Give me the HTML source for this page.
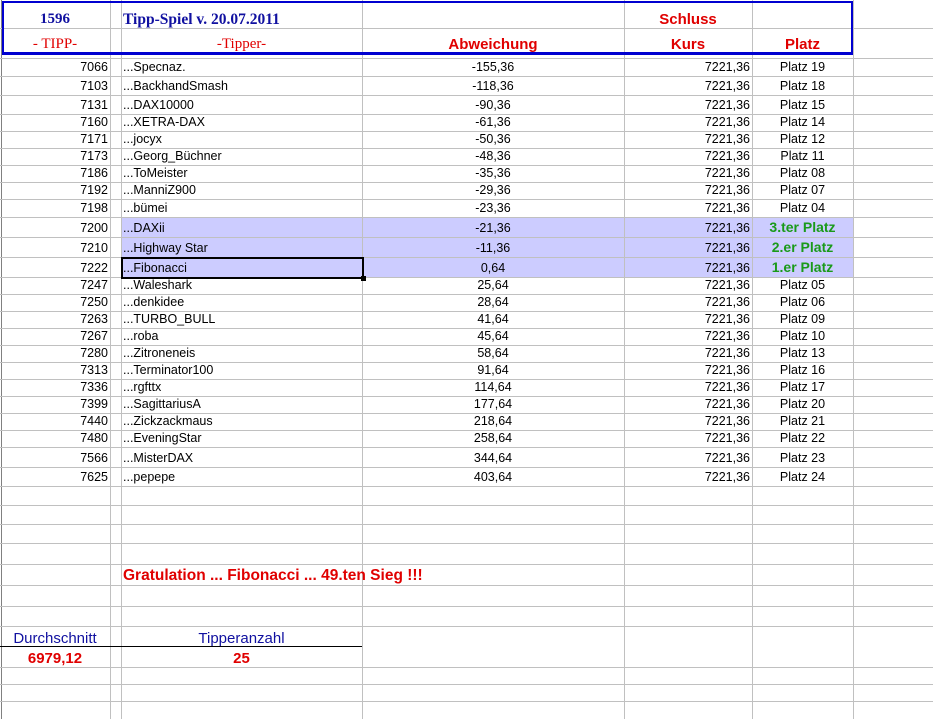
<!DOCTYPE html>
<html><head><meta charset="utf-8"><style>
body{margin:0;width:933px;height:719px;position:relative;overflow:hidden;background:#fff;font-family:"Liberation Sans",sans-serif;font-size:12.5px;color:#000}
.h{position:absolute;left:0;width:933px;height:1px;background:#c0c0c0}
.v{position:absolute;top:0;width:1px;height:719px;background:#c0c0c0}
.r{position:absolute;left:0;width:933px}
.c{position:absolute;bottom:1px;white-space:nowrap;line-height:15px}
.a{left:0;width:108px;text-align:right}
.b{left:123px}
.d{left:362px;width:262px;text-align:center}
.k{left:624px;width:126px;text-align:right}
.p{left:752px;width:101px;text-align:center}
.g{color:#1a9a1a;font-weight:bold;font-size:14px}
.hl{position:absolute;left:122px;width:731px;background:#ccccff}
.red{color:#e00000;font-weight:bold}
.ser{font-family:"Liberation Serif",serif;font-weight:bold}
</style></head><body>
<div class="hl" style="top:218px;height:59px"></div>
<div class="v" style="left:110px"></div><div class="v" style="left:121px"></div><div class="v" style="left:362px"></div><div class="v" style="left:624px"></div><div class="v" style="left:752px"></div><div class="v" style="left:853px"></div>
<div class="v" style="left:1px;background:#808080"></div>
<div class="h" style="top:28px"></div><div class="h" style="top:58px"></div><div class="h" style="top:76px"></div><div class="h" style="top:95px"></div><div class="h" style="top:114px"></div><div class="h" style="top:131px"></div><div class="h" style="top:148px"></div><div class="h" style="top:165px"></div><div class="h" style="top:182px"></div><div class="h" style="top:199px"></div><div class="h" style="top:217px"></div><div class="h" style="top:237px"></div><div class="h" style="top:257px"></div><div class="h" style="top:277px"></div><div class="h" style="top:294px"></div><div class="h" style="top:311px"></div><div class="h" style="top:328px"></div><div class="h" style="top:345px"></div><div class="h" style="top:362px"></div><div class="h" style="top:379px"></div><div class="h" style="top:396px"></div><div class="h" style="top:413px"></div><div class="h" style="top:430px"></div><div class="h" style="top:447px"></div><div class="h" style="top:467px"></div><div class="h" style="top:486px"></div><div class="h" style="top:505px"></div><div class="h" style="top:524px"></div><div class="h" style="top:543px"></div><div class="h" style="top:564px"></div><div class="h" style="top:585px"></div><div class="h" style="top:606px"></div><div class="h" style="top:626px"></div><div class="h" style="top:667px"></div><div class="h" style="top:684px"></div><div class="h" style="top:701px"></div>
<div style="position:absolute;left:2px;top:1px;width:847px;height:49px;border:2px solid #0000d0;border-top-width:2px;border-bottom-width:3px"></div>
<div style="position:absolute;left:0;top:646px;width:362px;height:1px;background:#000"></div>
<div style="position:absolute;left:121px;top:257px;width:239px;height:18px;border:2px solid #000"></div>
<div style="position:absolute;left:361px;top:276px;width:5px;height:5px;background:#000"></div>

<div class="r" style="top:0;height:28px"><div class="c ser" style="left:0;width:110px;text-align:center;color:#1010a0;font-size:15px">1596</div><div class="c ser" style="left:123px;color:#1010a0;font-size:15.5px">Tipp-Spiel v. 20.07.2011</div><div class="c red" style="left:624px;width:128px;text-align:center;font-size:15px">Schluss</div></div>
<div class="r" style="top:28px;height:25px"><div class="c ser" style="left:0;width:110px;text-align:center;color:#e00000;font-size:15px;font-weight:normal">- TIPP-</div><div class="c ser" style="left:121px;width:241px;text-align:center;color:#e00000;font-size:15px;font-weight:normal">-Tipper-</div><div class="c red" style="left:362px;width:262px;text-align:center;font-size:15px">Abweichung</div><div class="c red" style="left:624px;width:128px;text-align:center;font-size:15px">Kurs</div><div class="c red" style="left:752px;width:101px;text-align:center;font-size:15px">Platz</div></div>

<div class="r" style="top:58px;height:18px"><div class="c a">7066</div><div class="c b">...Specnaz.</div><div class="c d">-155,36</div><div class="c k">7221,36</div><div class="c p">Platz 19</div></div>
<div class="r" style="top:76px;height:19px"><div class="c a">7103</div><div class="c b">...BackhandSmash</div><div class="c d">-118,36</div><div class="c k">7221,36</div><div class="c p">Platz 18</div></div>
<div class="r" style="top:95px;height:19px"><div class="c a">7131</div><div class="c b">...DAX10000</div><div class="c d">-90,36</div><div class="c k">7221,36</div><div class="c p">Platz 15</div></div>
<div class="r" style="top:114px;height:17px"><div class="c a">7160</div><div class="c b">...XETRA-DAX</div><div class="c d">-61,36</div><div class="c k">7221,36</div><div class="c p">Platz 14</div></div>
<div class="r" style="top:131px;height:17px"><div class="c a">7171</div><div class="c b">...jocyx</div><div class="c d">-50,36</div><div class="c k">7221,36</div><div class="c p">Platz 12</div></div>
<div class="r" style="top:148px;height:17px"><div class="c a">7173</div><div class="c b">...Georg_Büchner</div><div class="c d">-48,36</div><div class="c k">7221,36</div><div class="c p">Platz 11</div></div>
<div class="r" style="top:165px;height:17px"><div class="c a">7186</div><div class="c b">...ToMeister</div><div class="c d">-35,36</div><div class="c k">7221,36</div><div class="c p">Platz 08</div></div>
<div class="r" style="top:182px;height:17px"><div class="c a">7192</div><div class="c b">...ManniZ900</div><div class="c d">-29,36</div><div class="c k">7221,36</div><div class="c p">Platz 07</div></div>
<div class="r" style="top:199px;height:18px"><div class="c a">7198</div><div class="c b">...bümei</div><div class="c d">-23,36</div><div class="c k">7221,36</div><div class="c p">Platz 04</div></div>
<div class="r" style="top:217px;height:20px"><div class="c a">7200</div><div class="c b">...DAXii</div><div class="c d">-21,36</div><div class="c k">7221,36</div><div class="c p g" style="bottom:2px">3.ter Platz</div></div>
<div class="r" style="top:237px;height:20px"><div class="c a">7210</div><div class="c b">...Highway Star</div><div class="c d">-11,36</div><div class="c k">7221,36</div><div class="c p g" style="bottom:2px">2.er Platz</div></div>
<div class="r" style="top:257px;height:20px"><div class="c a">7222</div><div class="c b">...Fibonacci</div><div class="c d">0,64</div><div class="c k">7221,36</div><div class="c p g" style="bottom:2px">1.er Platz</div></div>
<div class="r" style="top:277px;height:17px"><div class="c a">7247</div><div class="c b">...Waleshark</div><div class="c d">25,64</div><div class="c k">7221,36</div><div class="c p">Platz 05</div></div>
<div class="r" style="top:294px;height:17px"><div class="c a">7250</div><div class="c b">...denkidee</div><div class="c d">28,64</div><div class="c k">7221,36</div><div class="c p">Platz 06</div></div>
<div class="r" style="top:311px;height:17px"><div class="c a">7263</div><div class="c b">...TURBO_BULL</div><div class="c d">41,64</div><div class="c k">7221,36</div><div class="c p">Platz 09</div></div>
<div class="r" style="top:328px;height:17px"><div class="c a">7267</div><div class="c b">...roba</div><div class="c d">45,64</div><div class="c k">7221,36</div><div class="c p">Platz 10</div></div>
<div class="r" style="top:345px;height:17px"><div class="c a">7280</div><div class="c b">...Zitroneneis</div><div class="c d">58,64</div><div class="c k">7221,36</div><div class="c p">Platz 13</div></div>
<div class="r" style="top:362px;height:17px"><div class="c a">7313</div><div class="c b">...Terminator100</div><div class="c d">91,64</div><div class="c k">7221,36</div><div class="c p">Platz 16</div></div>
<div class="r" style="top:379px;height:17px"><div class="c a">7336</div><div class="c b">...rgfttx</div><div class="c d">114,64</div><div class="c k">7221,36</div><div class="c p">Platz 17</div></div>
<div class="r" style="top:396px;height:17px"><div class="c a">7399</div><div class="c b">...SagittariusA</div><div class="c d">177,64</div><div class="c k">7221,36</div><div class="c p">Platz 20</div></div>
<div class="r" style="top:413px;height:17px"><div class="c a">7440</div><div class="c b">...Zickzackmaus</div><div class="c d">218,64</div><div class="c k">7221,36</div><div class="c p">Platz 21</div></div>
<div class="r" style="top:430px;height:17px"><div class="c a">7480</div><div class="c b">...EveningStar</div><div class="c d">258,64</div><div class="c k">7221,36</div><div class="c p">Platz 22</div></div>
<div class="r" style="top:447px;height:20px"><div class="c a">7566</div><div class="c b">...MisterDAX</div><div class="c d">344,64</div><div class="c k">7221,36</div><div class="c p">Platz 23</div></div>
<div class="r" style="top:467px;height:19px"><div class="c a">7625</div><div class="c b">...pepepe</div><div class="c d">403,64</div><div class="c k">7221,36</div><div class="c p">Platz 24</div></div>

<div class="r" style="top:564px;height:21px"><div class="c red" style="left:123px;font-size:15.5px;bottom:2px">Gratulation ... Fibonacci ... 49.ten Sieg !!!</div></div>
<div class="r" style="top:626px;height:20px"><div class="c" style="left:0;width:110px;text-align:center;color:#1010a0;font-size:15px;bottom:0">Durchschnitt</div><div class="c" style="left:121px;width:241px;text-align:center;color:#1010a0;font-size:15px;bottom:0">Tipperanzahl</div></div>
<div class="r" style="top:647px;height:20px"><div class="c red" style="left:0;width:110px;text-align:center;font-size:15px">6979,12</div><div class="c red" style="left:121px;width:241px;text-align:center;font-size:15px">25</div></div>
</body></html>
